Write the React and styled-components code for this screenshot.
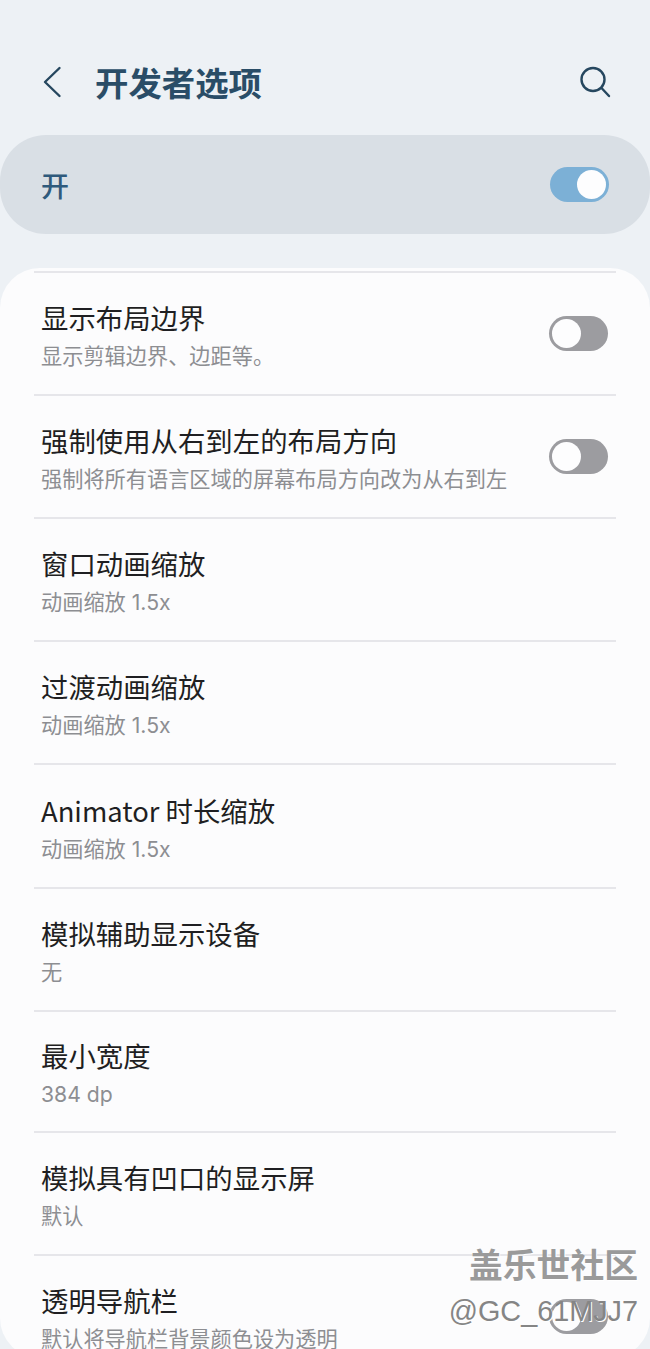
import React from 'react';
import styled, { createGlobalStyle } from 'styled-components';

const GlobalStyle = createGlobalStyle`
  html, body {
    margin: 0;
    padding: 0;
    background: #edf1f5;
  }
  * {
    box-sizing: border-box;
  }
`;

const fontStack = `'Noto Sans CJK SC', 'Noto Sans', sans-serif`;

const Screen = styled.div`
  position: relative;
  width: 650px;
  height: 1349px;
  overflow: hidden;
  background: #edf1f5;
  font-family: ${fontStack};
`;

const Header = styled.header`
  display: flex;
  align-items: center;
  height: 135px;
  padding: 29px 39px 0 42px;
`;

const BackButton = styled.span`
  display: flex;
  width: 53px;
  color: #26475f;
`;

const Title = styled.h1`
  flex: 1;
  margin: 0;
  font-size: 33.4px;
  font-weight: 700;
  line-height: 44px;
  color: #2a4d67;
`;

const SearchButton = styled.span`
  display: flex;
  color: #26475f;
`;

const MasterBar = styled.div`
  display: flex;
  align-items: center;
  justify-content: space-between;
  height: 99px;
  padding: 0 41px 0 41px;
  border-radius: 46px;
  background: #d9dfe5;
`;

const MasterLabel = styled.span`
  font-size: 28px;
  font-weight: 500;
  color: #2f5a7c;
`;

const Track = styled.span`
  position: relative;
  display: block;
  flex: none;
  width: 59px;
  height: 35px;
  border-radius: 18px;
  background: ${p => (p.$on ? '#7cb0d6' : '#9c9ca0')};
`;

const Knob = styled.span`
  position: absolute;
  top: 3px;
  left: ${p => (p.$on ? '27px' : '3px')};
  width: 29px;
  height: 29px;
  border-radius: 50%;
  background: #fdfdfe;
`;

const Card = styled.main`
  margin-top: 34px;
  height: 1090px;
  padding: 3px 34px 0;
  border-radius: 40px;
  background: #fcfcfd;
`;

const Row = styled.div`
  display: flex;
  align-items: center;
  justify-content: space-between;
  height: ${p => p.$height || 123}px;
  padding: 2px 8px 0 7px;
  border-top: 2px solid #e6e6ea;
`;

const RowText = styled.div`
  display: flex;
  flex-direction: column;
  gap: 3px;
`;

const RowTitle = styled.div`
  font-size: 27.4px;
  line-height: 40px;
  color: #1f1f22;
`;

const RowSub = styled.div`
  font-family: 'Inter', ${fontStack};
  font-size: 21.2px;
  line-height: 32px;
  color: #8d8e92;
`;

const RowAction = styled.div`
  flex: none;
  margin-bottom: 2px;
`;

const Watermark = styled.div`
  position: absolute;
  right: 12px;
  bottom: 20px;
  display: flex;
  flex-direction: column;
  align-items: flex-end;
  gap: 6px;
  text-shadow: 1px 1px 0 #fff;
  pointer-events: none;
`;

const WatermarkName = styled.div`
  font-size: 33.8px;
  line-height: 46px;
  font-weight: 700;
  color: #9a9a9a;
`;

const WatermarkUser = styled.div`
  font-family: 'Liberation Sans', sans-serif;
  font-size: 28.8px;
  line-height: 36px;
  color: #858585;
`;

const rows = [
  { title: '显示布局边界', sub: '显示剪辑边界、边距等。', toggle: true },
  { title: '强制使用从右到左的布局方向', sub: '强制将所有语言区域的屏幕布局方向改为从右到左', toggle: true },
  { title: '窗口动画缩放', sub: '动画缩放 1.5x' },
  { title: '过渡动画缩放', sub: '动画缩放 1.5x' },
  { title: 'Animator 时长缩放', sub: '动画缩放 1.5x', height: 124 },
  { title: '模拟辅助显示设备', sub: '无' },
  { title: '最小宽度', sub: '384 dp', height: 121 },
  { title: '模拟具有凹口的显示屏', sub: '默认' },
  { title: '透明导航栏', sub: '默认将导航栏背景颜色设为透明', toggle: true },
];

const Toggle = ({ on }) => (
  <Track $on={on}>
    <Knob $on={on} />
  </Track>
);

const App = () => (
  <Screen>
    <GlobalStyle />
    <Header>
      <BackButton>
        <svg width="20" height="32" viewBox="0 0 20 32" fill="none">
          <path d="M17.5 2 L3 16 L17.5 30" stroke="currentColor" strokeWidth="2.4" strokeLinecap="round" strokeLinejoin="round" />
        </svg>
      </BackButton>
      <Title>开发者选项</Title>
      <SearchButton>
        <svg width="32" height="32" viewBox="0 0 32 32" fill="none">
          <circle cx="14" cy="13.5" r="11.5" stroke="currentColor" strokeWidth="2.4" />
          <path d="M22.5 22 L30 30" stroke="currentColor" strokeWidth="2.4" strokeLinecap="round" />
        </svg>
      </SearchButton>
    </Header>
    <MasterBar>
      <MasterLabel>开</MasterLabel>
      <Toggle on />
    </MasterBar>
    <Card>
      {rows.map(row => (
        <Row key={row.title} $height={row.height}>
          <RowText>
            <RowTitle>{row.title}</RowTitle>
            <RowSub>{row.sub}</RowSub>
          </RowText>
          {row.toggle && (
            <RowAction>
              <Toggle />
            </RowAction>
          )}
        </Row>
      ))}
    </Card>
    <Watermark>
      <WatermarkName>盖乐世社区</WatermarkName>
      <WatermarkUser>@GC_61MJJ7</WatermarkUser>
    </Watermark>
  </Screen>
);

export default App;
